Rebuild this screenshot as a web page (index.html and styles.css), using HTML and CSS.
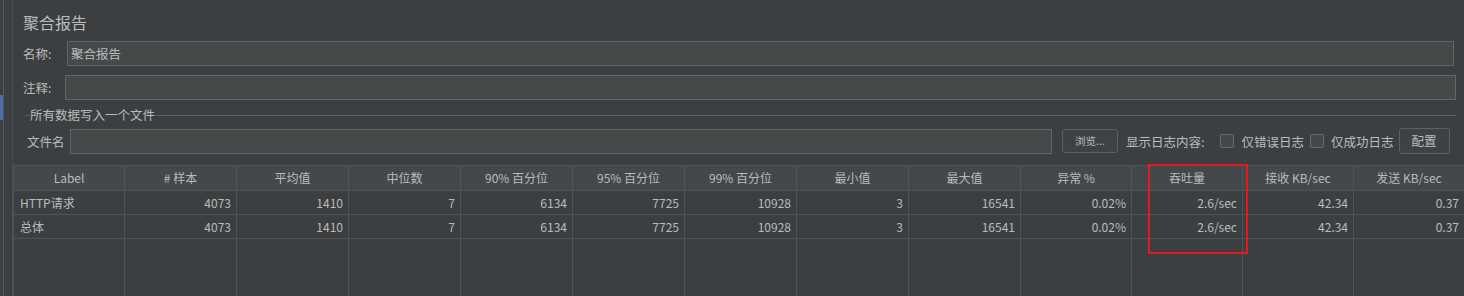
FILE: index.html
```html
<!DOCTYPE html>
<html lang="zh">
<head>
<meta charset="utf-8">
<title>聚合报告</title>
<link rel="stylesheet" href="styles.css">
</head>
<body>
<div class="app">
  <div class="gutter">
    <div class="strip"><div class="sel"></div></div>
    <div class="gap"></div>
  </div>
  <div class="main">
    <div class="title">聚合报告</div>
    <div class="row name-row">
      <span class="lbl">名称:</span>
      <div class="input">聚合报告</div>
    </div>
    <div class="row comment-row">
      <span class="lbl">注释:</span>
      <div class="input"></div>
    </div>
    <div class="group-title"><span class="gt-lead"></span><span class="gt-text">所有数据写入一个文件</span><span class="gt-line"></span></div>
    <div class="row file-row">
      <span class="lbl">文件名</span>
      <div class="input"></div>
      <div class="btn browse">浏览...</div>
      <span class="lbl2">显示日志内容:</span>
      <span class="cb"></span><span class="cb-text">仅错误日志</span>
      <span class="cb"></span><span class="cb-text">仅成功日志</span>
      <div class="btn config">配置</div>
    </div>
    <div class="table">
      <div class="th">Label</div><div class="th"># 样本</div><div class="th">平均值</div><div class="th">中位数</div><div class="th">90% 百分位</div><div class="th">95% 百分位</div><div class="th">99% 百分位</div><div class="th">最小值</div><div class="th">最大值</div><div class="th">异常 %</div><div class="th">吞吐量</div><div class="th">接收 KB/sec</div><div class="th">发送 KB/sec</div>
      <div class="td l">HTTP请求</div><div class="td">4073</div><div class="td">1410</div><div class="td">7</div><div class="td">6134</div><div class="td">7725</div><div class="td">10928</div><div class="td">3</div><div class="td">16541</div><div class="td">0.02%</div><div class="td">2.6/sec</div><div class="td">42.34</div><div class="td">0.37</div>
      <div class="td l">总体</div><div class="td">4073</div><div class="td">1410</div><div class="td">7</div><div class="td">6134</div><div class="td">7725</div><div class="td">10928</div><div class="td">3</div><div class="td">16541</div><div class="td">0.02%</div><div class="td">2.6/sec</div><div class="td">42.34</div><div class="td">0.37</div>
      <div class="tf"></div><div class="tf"></div><div class="tf"></div><div class="tf"></div><div class="tf"></div><div class="tf"></div><div class="tf"></div><div class="tf"></div><div class="tf"></div><div class="tf"></div><div class="tf"></div><div class="tf"></div><div class="tf"></div>
    </div>
  </div>
  <div class="highlight"></div>
</div>
</body>
</html>
```

FILE: styles.css
```css
* { box-sizing: border-box; }
html, body { margin: 0; padding: 0; }
body {
  background: #3c3f41;
  color: #bbbbbb;
  font-family: "Noto Sans CJK SC", "Noto Sans", sans-serif;
  font-size: 12px;
  width: 1464px;
  height: 296px;
  overflow: hidden;
}
.app {
  position: relative;
  display: flex;
  height: 296px;
  overflow: hidden;
}
.gutter {
  display: flex;
  width: 13px;
  flex: none;
}
.strip {
  width: 4px;
  border-right: 1px solid #55585a;
  padding-top: 95px;
}
.sel {
  width: 3px;
  height: 25px;
  background: #4b6eaf;
}
.gap {
  width: 9px;
  border-right: 1px solid #4b4e50;
}
.main {
  flex: 1;
  display: flex;
  flex-direction: column;
  min-width: 0;
}
.main > * { flex-shrink: 0; }
.title {
  height: 36px;
  padding-left: 10px;
  padding-top: 10px;
  font-size: 16px;
  line-height: 24px;
}
.row {
  display: flex;
  align-items: center;
}
.lbl { flex: none; font-size: 12.5px; }
.input {
  background: #45494a;
  border: 1px solid #646464;
  height: 25px;
  line-height: 23px;
  padding-left: 3px;
  font-size: 12.5px;
}
.name-row { margin-top: 5px; padding-left: 10px; padding-right: 10px; }
.name-row .lbl { width: 44px; }
.name-row .input { flex: 1; }
.comment-row { margin-top: 9px; padding-left: 10px; padding-right: 8px; }
.comment-row .lbl { width: 42px; }
.comment-row .input { flex: 1; }
.group-title {
  display: flex;
  align-items: center;
  margin-top: 6px;
  height: 18px;
  padding-left: 12px;
  padding-right: 8px;
  font-size: 12.5px;
  line-height: 18px;
}
.gt-lead { width: 5px; border-top: 1px solid #5d6062; }
.gt-text { padding: 0 1px 0 0; }
.gt-line { flex: 1; border-top: 1px solid #5d6062; }
.file-row { margin-top: 4px; padding-left: 14px; height: 26px; }
.file-row .lbl { width: 43px; }
.file-row .input { width: 982px; flex: none; }
.btn {
  border: 1px solid #5e6060;
  border-radius: 3px;
  background: #3e4244;
  text-align: center;
}
.browse {
  margin-left: 10px;
  width: 56px;
  height: 24px;
  line-height: 22px;
  font-size: 10.5px;
}
.lbl2 { margin-left: 8px; font-size: 12.5px; }
.cb {
  width: 14px;
  height: 14px;
  border: 1px solid #6b6b6b;
  border-radius: 2px;
  background: #43494a;
  margin-left: 16px;
  flex: none;
}
.cb-text { margin-left: 7px; font-size: 12.5px; }
.cb-text + .cb { margin-left: 6px; }
.config {
  margin-left: 5px;
  width: 51px;
  height: 26px;
  line-height: 24px;
  font-size: 12.5px;
}
.table {
  margin-top: 11px;
  display: grid;
  grid-template-columns: repeat(9, 112px) repeat(4, 111px);
  grid-template-rows: 26px 24px 24px 57px;
  background: #3c3f41;
}
.th {
  background: #45484a;
  border-top: 1px solid #515457;
  border-right: 1px solid #515457;
  border-bottom: 1px solid #515457;
  text-align: center;
  line-height: 24px;
  white-space: nowrap;
}
.th:first-child { border-left: 1px solid #515457; }
.td {
  border-right: 1px solid #515457;
  border-bottom: 1px solid #515457;
  text-align: right;
  padding-right: 5px;
  line-height: 23px;
  white-space: nowrap;
}
.td.l { text-align: left; padding-left: 6px; border-left: 1px solid #515457; }
.tf { border-right: 1px solid #515457; }
.tf:nth-child(13n+1) { border-left: 1px solid #515457; }
.highlight {
  position: absolute;
  left: 1148px;
  top: 164px;
  width: 100px;
  height: 90px;
  border: 2px solid #e8191e;
  pointer-events: none;
}
```
